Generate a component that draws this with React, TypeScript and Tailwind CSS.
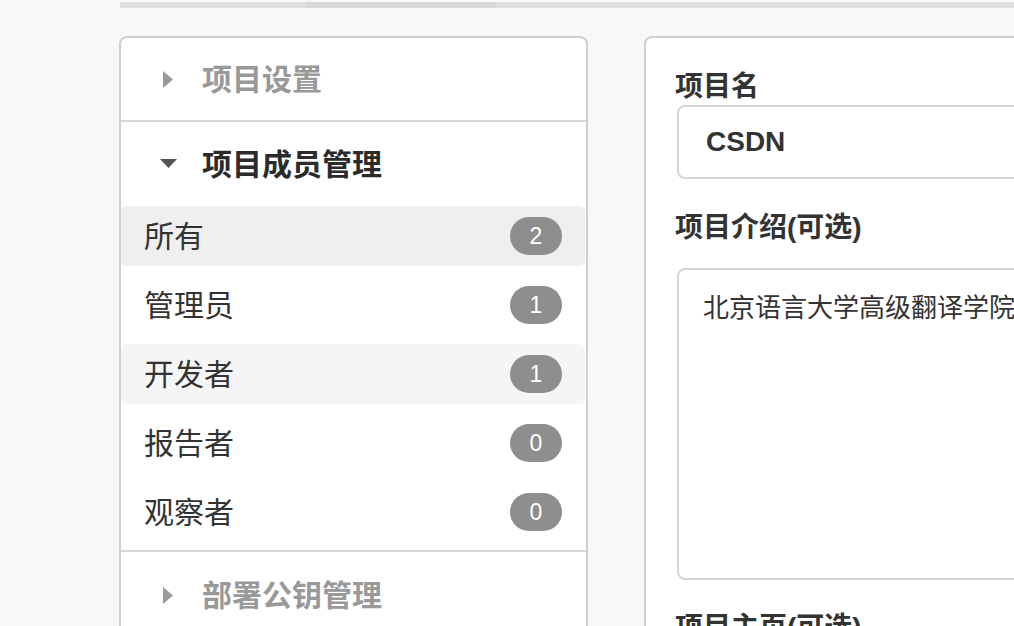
import React from "react";

const font = "font-['Liberation_Sans','Noto_Sans_CJK_SC',sans-serif]";

function TriRight() {
  return (
    <svg width="10" height="17" viewBox="0 0 10 17" className="shrink-0">
      <polygon points="0,0 10,8.5 0,17" fill="#9a9a9a" />
    </svg>
  );
}

function TriDown() {
  return (
    <svg width="17" height="10" viewBox="0 0 17 10" className="shrink-0">
      <polygon points="0,0 17,0 8.5,9" fill="#555555" />
    </svg>
  );
}

const rows = [
  { name: "所有", count: 2, bg: "bg-[#efefef]" },
  { name: "管理员", count: 1, bg: "" },
  { name: "开发者", count: 1, bg: "bg-[#f5f5f5]" },
  { name: "报告者", count: 0, bg: "" },
  { name: "观察者", count: 0, bg: "" },
];

export default function App() {
  return (
    <div className={`w-[1014px] h-[626px] overflow-hidden bg-[#f8f8f8] ${font}`}>
      {/* top bar */}
      <div className="pt-[2px] pl-[120px]">
        <div className="flex h-[6px] w-[1000px] bg-[#dfdfdf]">
          <div className="w-[186px] shrink-0" />
          <div className="w-[190px] shrink-0 bg-[#d9d9d9]" />
        </div>
      </div>

      <div className="flex gap-[56px] pl-[119px] pt-[28px]">
        {/* left panel */}
        <div className="w-[469px] shrink-0 h-[700px] rounded-[8px] border-2 border-[#cfcfcf] bg-white">
          <div className="flex h-[82px] items-center pl-[42px] gap-[29px]">
            <TriRight />
            <span className="text-[30px] font-bold text-[#999999]">项目设置</span>
          </div>
          <div className="h-[2px] bg-[#d8d8d8]" />
          <div className="flex h-[84px] items-center pl-[39px] gap-[25px]">
            <TriDown />
            <span className="text-[30px] font-bold text-[#2b2b2b]">项目成员管理</span>
          </div>
          <div className="flex flex-col gap-[9px] pr-px">
            {rows.map((r) => (
              <div
                key={r.name}
                className={`flex h-[60px] items-center justify-between rounded-[6px] pl-[23px] pr-[23px] ${r.bg}`}
              >
                <span className="text-[30px] text-[#333333]">{r.name}</span>
                <span className="flex h-[38px] w-[52px] items-center justify-center rounded-full bg-[#8e8e8e] text-[23px] text-white">
                  {r.count}
                </span>
              </div>
            ))}
          </div>
          <div className="mt-[8px] h-[2px] bg-[#d8d8d8]" />
          <div className="flex h-[86px] items-center pl-[42px] gap-[29px]">
            <TriRight />
            <span className="text-[30px] font-bold text-[#999999]">部署公钥管理</span>
          </div>
        </div>

        {/* right panel */}
        <div className="w-[600px] shrink-0 h-[700px] rounded-[8px] border-2 border-[#cfcfcf] bg-white pl-[29px] pt-[32px]">
          <div className="text-[28px] font-bold leading-[34px] text-[#333333]">项目名</div>
          <div className="ml-[2px] mt-px flex h-[74px] items-center rounded-[8px] border-2 border-[#d6d6d6] pl-[27px] text-[28px] font-bold text-[#333333]">
            CSDN
          </div>
          <div className="mt-[32px] text-[28px] font-bold leading-[34px] text-[#333333]">项目介绍(可选)</div>
          <div className="ml-[2px] mt-[23px] h-[312px] rounded-[8px] border-2 border-[#d6d6d6] pl-[24px] pt-[20px] text-[26px] leading-[36px] text-[#333333] whitespace-nowrap overflow-hidden">
            北京语言大学高级翻译学院
          </div>
          <div className="mt-[31px] text-[28px] font-bold leading-[34px] text-[#333333]">项目主页(可选)</div>
        </div>
      </div>
    </div>
  );
}
